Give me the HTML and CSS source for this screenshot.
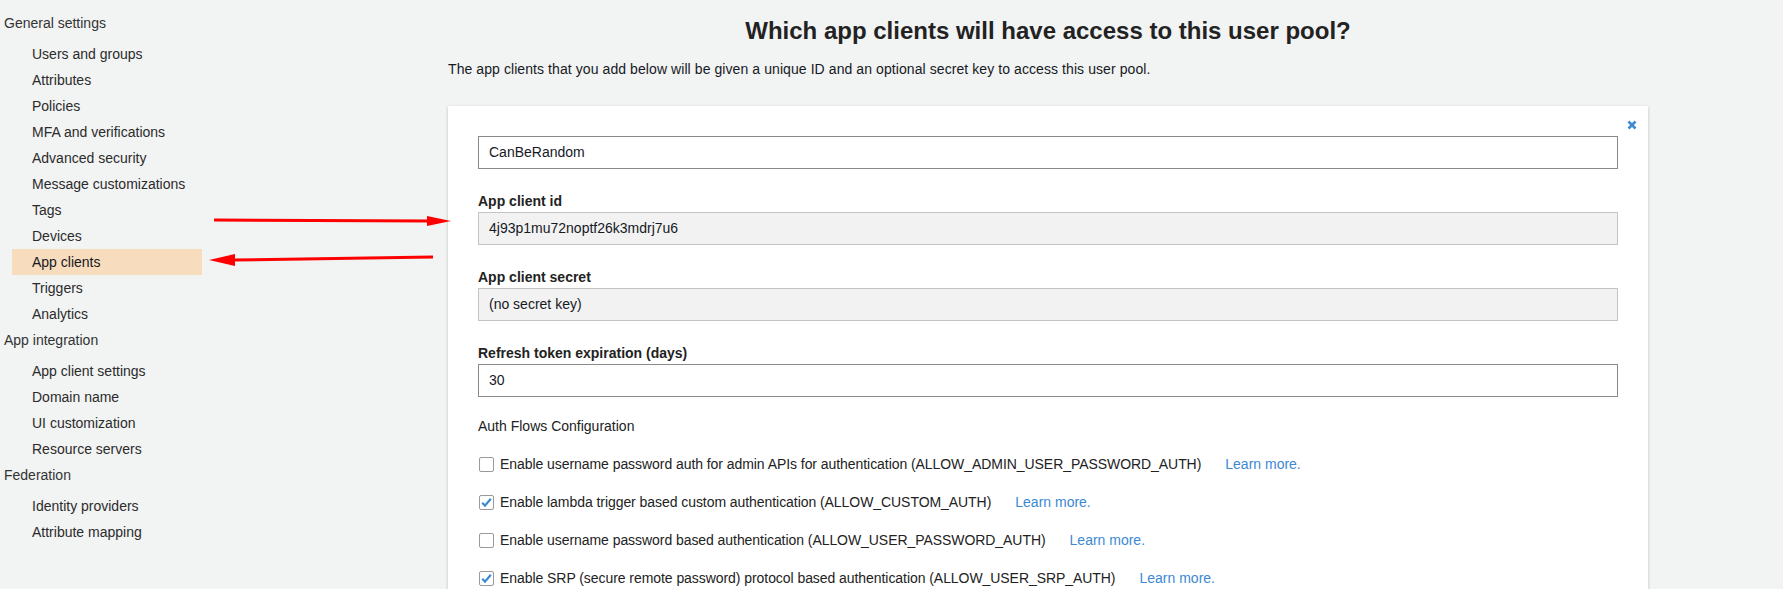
FILE: index.html
```html
<!DOCTYPE html>
<html lang="en">
<head>
<meta charset="utf-8">
<title>App clients</title>
<link rel="stylesheet" href="styles.css">
</head>
<body>
<div class="page">
  <nav class="sidebar">
    <div class="nav-group">General settings</div>
    <ul class="nav-list">
      <li class="nav-item">Users and groups</li>
      <li class="nav-item">Attributes</li>
      <li class="nav-item">Policies</li>
      <li class="nav-item">MFA and verifications</li>
      <li class="nav-item">Advanced security</li>
      <li class="nav-item">Message customizations</li>
      <li class="nav-item">Tags</li>
      <li class="nav-item">Devices</li>
      <li class="nav-item active">App clients</li>
      <li class="nav-item">Triggers</li>
      <li class="nav-item">Analytics</li>
    </ul>
    <div class="nav-group">App integration</div>
    <ul class="nav-list">
      <li class="nav-item">App client settings</li>
      <li class="nav-item">Domain name</li>
      <li class="nav-item">UI customization</li>
      <li class="nav-item">Resource servers</li>
    </ul>
    <div class="nav-group">Federation</div>
    <ul class="nav-list">
      <li class="nav-item">Identity providers</li>
      <li class="nav-item">Attribute mapping</li>
    </ul>
  </nav>

  <main class="main">
    <h1 class="title">Which app clients will have access to this user pool?</h1>
    <p class="subtitle">The app clients that you add below will be given a unique ID and an optional secret key to access this user pool.</p>

    <section class="card">
      <span class="close" aria-label="Remove">
        <svg width="10" height="10" viewBox="0 0 10 10"><path d="M1.5 1.5 L8.5 8.5 M8.5 1.5 L1.5 8.5" stroke="#3b89d3" stroke-width="2.6" stroke-linecap="butt"/></svg>
      </span>
      <div class="input">CanBeRandom</div>

      <div class="field">
        <div class="label">App client id</div>
        <div class="input readonly">4j93p1mu72noptf26k3mdrj7u6</div>
      </div>
      <div class="field">
        <div class="label">App client secret</div>
        <div class="input readonly">(no secret key)</div>
      </div>
      <div class="field">
        <div class="label">Refresh token expiration (days)</div>
        <div class="input">30</div>
      </div>

      <div class="section-title">Auth Flows Configuration</div>

      <div class="check-row">
        <span class="checkbox"></span>
        <span class="check-text">Enable username password auth for admin APIs for authentication (ALLOW_ADMIN_USER_PASSWORD_AUTH)</span>
        <a class="learn">Learn more.</a>
      </div>
      <div class="check-row">
        <span class="checkbox checked"><svg width="13" height="13" viewBox="0 0 13 13"><path d="M2.2 6.8 L5 9.6 L10.8 2.8" fill="none" stroke="#3b89d3" stroke-width="2.2"/></svg></span>
        <span class="check-text">Enable lambda trigger based custom authentication (ALLOW_CUSTOM_AUTH)</span>
        <a class="learn">Learn more.</a>
      </div>
      <div class="check-row">
        <span class="checkbox"></span>
        <span class="check-text">Enable username password based authentication (ALLOW_USER_PASSWORD_AUTH)</span>
        <a class="learn">Learn more.</a>
      </div>
      <div class="check-row">
        <span class="checkbox checked"><svg width="13" height="13" viewBox="0 0 13 13"><path d="M2.2 6.8 L5 9.6 L10.8 2.8" fill="none" stroke="#3b89d3" stroke-width="2.2"/></svg></span>
        <span class="check-text">Enable SRP (secure remote password) protocol based authentication (ALLOW_USER_SRP_AUTH)</span>
        <a class="learn">Learn more.</a>
      </div>
    </section>
  </main>
</div>

<svg class="annotations" width="1783" height="589" viewBox="0 0 1783 589">
  <line x1="214" y1="220" x2="430" y2="221" stroke="#ff0000" stroke-width="3"/>
  <polygon points="427,216 451,221 427,226" fill="#ff0000"/>
  <line x1="433" y1="257" x2="232" y2="260" stroke="#ff0000" stroke-width="3"/>
  <polygon points="235,254 209,260 235,266" fill="#ff0000"/>
</svg>
</body>
</html>
```

FILE: styles.css
```css
html, body {
  margin: 0;
  padding: 0;
}

body {
  background: #f2f3f3;
  font-family: "Liberation Sans", Arial, Helvetica, sans-serif;
  font-size: 14px;
  color: #16191f;
  overflow: hidden;
  height: 589px;
  position: relative;
}

.page {
  display: flex;
  align-items: flex-start;
}

/* Sidebar */
.sidebar {
  width: 448px;
  flex: 0 0 448px;
  padding-top: 10px;
}

.nav-group {
  height: 26px;
  line-height: 26px;
  padding-left: 4px;
  margin-bottom: 5px;
  color: #333;
}

.nav-list {
  list-style: none;
  margin: 0;
  padding: 0;
}

.nav-item {
  margin-left: 12px;
  width: 190px;
  box-sizing: border-box;
  padding-left: 20px;
  height: 26px;
  line-height: 26px;
  color: #2b2b2b;
  white-space: nowrap;
}

.nav-item.active {
  background: #f8dcbe;
  color: #16191f;
}

/* Main */
.main {
  width: 1200px;
  flex: 0 0 1200px;
  padding-top: 17px;
}

.title {
  margin: 0;
  font-size: 24px;
  line-height: 28px;
  font-weight: bold;
  text-align: center;
  color: #222;
}

.subtitle {
  margin: 14px 0 0;
  line-height: 20px;
  font-size: 14px;
  letter-spacing: 0.08px;
}

.card {
  position: relative;
  margin-top: 27px;
  background: #fff;
  box-shadow: 0 1px 3px rgba(0, 0, 0, 0.22);
  padding: 30px 30px 40px;
}

.close {
  position: absolute;
  top: 14px;
  right: 11px;
  width: 10px;
  height: 10px;
  display: block;
}

.close svg {
  display: block;
}

.input {
  height: 33px;
  box-sizing: border-box;
  border: 1px solid #8a8a8a;
  background: #fff;
  padding: 0 10px;
  line-height: 31px;
  font-size: 14px;
  color: #16191f;
}

.input.readonly {
  background: #f2f2f2;
  border-color: #c4c4c4;
}

.field {
  margin-top: 22px;
}

.label {
  font-weight: bold;
  line-height: 20px;
  margin-bottom: 1px;
  color: #222;
}

.section-title {
  margin-top: 19px;
  line-height: 20px;
  color: #222;
}

.check-row {
  display: flex;
  align-items: center;
  margin-top: 18px;
  height: 20px;
  line-height: 20px;
}

.checkbox {
  width: 15px;
  height: 15px;
  box-sizing: border-box;
  border: 1px solid #9a9a9a;
  border-radius: 2px;
  background: #fff;
  margin-left: 1px;
  display: flex;
  align-items: center;
  justify-content: center;
  flex: 0 0 auto;
}

.checkbox svg {
  display: block;
}

.check-text {
  margin-left: 6px;
  color: #222;
  white-space: nowrap;
  letter-spacing: -0.06px;
}

.learn {
  margin-left: 24px;
  color: #3b89d3;
  white-space: nowrap;
}

.annotations {
  position: absolute;
  left: 0;
  top: 0;
  pointer-events: none;
}
```
